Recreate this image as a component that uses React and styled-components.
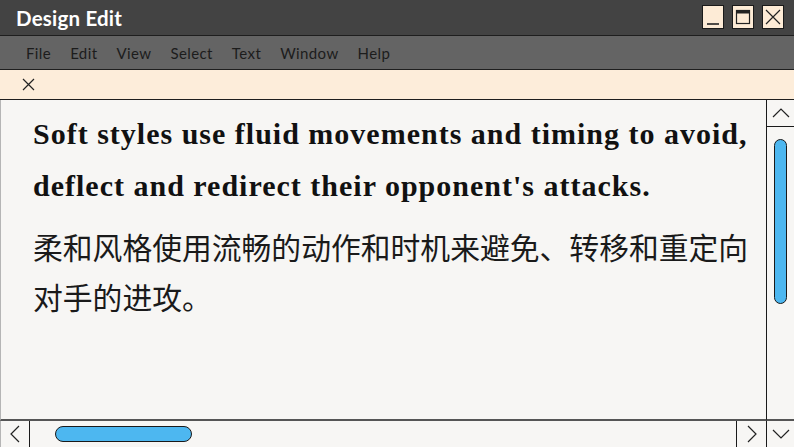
import React from "react";
import styled, { createGlobalStyle } from "styled-components";

const GlobalStyle = createGlobalStyle`
  html, body {
    margin: 0;
    padding: 0;
    background: #f7f6f4;
  }
  #root {
    width: 794px;
    height: 447px;
  }
`;

const menuItems = ["File", "Edit", "View", "Select", "Text", "Window", "Help"];

// small chevron used by all four scrollbar arrows
const Chevron = ({ dir }) => {
  const paths = {
    up: "M1 9 L9 1 L17 9",
    down: "M1 1 L9 9 L17 1",
    left: "M9 1 L1 9 L9 17",
    right: "M1 1 L9 9 L1 17",
  };
  const vertical = dir === "up" || dir === "down";
  return (
    <svg
      width={vertical ? 18 : 10}
      height={vertical ? 10 : 18}
      viewBox={vertical ? "0 0 18 10" : "0 0 10 18"}
      fill="none"
      stroke="#222"
      strokeWidth="1.2"
    >
      <path d={paths[dir]} />
    </svg>
  );
};

const App = () => {
  return (
    <>
      <GlobalStyle />
      <Window>
        <TitleBar>
          <Title>Design Edit</Title>
          <WindowButtons>
            <WinButton aria-label="minimize">
              <svg width="20" height="22" viewBox="0 0 20 22">
                <line x1="4" y1="18" x2="16" y2="18" stroke="#222" strokeWidth="1.6" />
              </svg>
            </WinButton>
            <WinButton aria-label="maximize">
              <svg width="20" height="22" viewBox="0 0 20 22">
                <rect x="3.5" y="4.5" width="13" height="13" fill="none" stroke="#222" strokeWidth="1.2" />
                <rect x="3.5" y="4.5" width="13" height="3" fill="#222" />
              </svg>
            </WinButton>
            <WinButton aria-label="close">
              <svg width="20" height="22" viewBox="0 0 20 22">
                <path d="M3 4 L17 18 M17 4 L3 18" stroke="#222" strokeWidth="1.2" />
              </svg>
            </WinButton>
          </WindowButtons>
        </TitleBar>

        <MenuBar>
          {menuItems.map((item) => (
            <MenuItem key={item}>{item}</MenuItem>
          ))}
        </MenuBar>

        <NoticeBar>
          <svg width="13" height="13" viewBox="0 0 13 13">
            <path d="M1 1 L12 12 M12 1 L1 12" stroke="#222" strokeWidth="1.2" />
          </svg>
        </NoticeBar>

        <Workspace>
          <Editor>
            <EnglishText>
              Soft styles use fluid movements and timing to avoid, deflect and
              redirect their opponent's attacks.
            </EnglishText>
            <ChineseText>
              柔和风格使用流畅的动作和时机来避免、转移和重定向对手的进攻。
            </ChineseText>
          </Editor>

          <VScroll>
            <ArrowBox $edge="bottom">
              <Chevron dir="up" />
            </ArrowBox>
            <VTrack>
              <VThumb />
            </VTrack>
          </VScroll>

          <HScroll>
            <ArrowBox $edge="right" $w="28px">
              <Chevron dir="left" />
            </ArrowBox>
            <HTrack>
              <HThumb />
            </HTrack>
            <ArrowBox $edge="left" $w="29px">
              <Chevron dir="right" />
            </ArrowBox>
          </HScroll>

          <Corner>
            <Chevron dir="down" />
          </Corner>
        </Workspace>
      </Window>
    </>
  );
};

const Window = styled.div`
  width: 794px;
  height: 447px;
  display: flex;
  flex-direction: column;
  overflow: hidden;
  background: #f7f6f4;
`;

const TitleBar = styled.div`
  height: 35px;
  flex: none;
  background: #434343;
  border-bottom: 1px solid #1e1e1e;
  display: flex;
  align-items: center;
  justify-content: space-between;
  padding: 0 10px 0 16px;
`;

const Title = styled.h1`
  margin: 0;
  font-family: "Lato", "Open Sans", sans-serif;
  font-weight: 700;
  font-size: 20.5px;
  color: #ffffff;
  letter-spacing: 0.2px;
`;

const WindowButtons = styled.div`
  display: flex;
  gap: 8px;
  align-self: flex-start;
  padding-top: 5px;
`;

const WinButton = styled.div`
  width: 20px;
  height: 22px;
  background: #fdebd6;
  border: 1px solid #1a1a1a;
  display: flex;
  align-items: center;
  justify-content: center;
  box-sizing: content-box;
  svg {
    display: block;
  }
`;

const MenuBar = styled.div`
  height: 32px;
  flex: none;
  background: #646464;
  border-bottom: 1px solid #1e1e1e;
  display: flex;
  align-items: center;
  gap: 19px;
  padding: 1px 0 0 26px;
`;

const MenuItem = styled.span`
  font-family: "Lato", "Open Sans", sans-serif;
  font-size: 15px;
  color: #1c1c1c;
  letter-spacing: 0.4px;
`;

const NoticeBar = styled.div`
  height: 29px;
  flex: none;
  background: #fdedda;
  border-bottom: 1px solid #1e1e1e;
  display: flex;
  align-items: center;
  padding-left: 22px;
`;

const Workspace = styled.div`
  flex: 1;
  display: grid;
  grid-template-columns: 1fr 27px;
  grid-template-rows: 1fr 26px;
  min-height: 0;
`;

const Editor = styled.div`
  border-left: 1px solid #b5b5b5;
  border-right: 1px solid #1a1a1a;
  border-bottom: 2px solid #555;
  padding: 8px 0 0 32px;
  overflow: hidden;
  background: #f7f6f4;
`;

const EnglishText = styled.p`
  margin: 0;
  width: 736px;
  font-family: "Liberation Serif", "Times New Roman", serif;
  font-weight: 700;
  font-size: 30px;
  line-height: 52px;
  letter-spacing: 1px;
  color: #111;
`;

const ChineseText = styled.p`
  margin: 9px 0 0;
  width: 730px;
  font-family: "Noto Sans CJK SC", sans-serif;
  font-size: 29.8px;
  line-height: 50px;
  color: #1a1a1a;
`;

const VScroll = styled.div`
  border-bottom: 2px solid #555;
  display: flex;
  flex-direction: column;
`;

const ArrowBox = styled.div`
  flex: none;
  width: ${(p) => p.$w || "auto"};
  height: ${(p) => (p.$edge === "bottom" ? "26px" : "auto")};
  display: flex;
  align-items: center;
  justify-content: center;
  border-${(p) => p.$edge}: 1px solid #1a1a1a;
`;

const VTrack = styled.div`
  flex: 1;
  padding: 12px 0 0 7px;
`;

const VThumb = styled.div`
  width: 11px;
  height: 163px;
  border: 1px solid #1a1a1a;
  border-radius: 7px;
  background: #4db7f0;
`;

const HScroll = styled.div`
  border-left: 1px solid #b5b5b5;
  border-right: 1px solid #1a1a1a;
  display: flex;
`;

const HTrack = styled.div`
  flex: 1;
  padding: 5px 0 0 25px;
`;

const HThumb = styled.div`
  width: 135px;
  height: 14px;
  border: 1px solid #1a1a1a;
  border-radius: 8px;
  background: #4db7f0;
`;

const Corner = styled.div`
  display: flex;
  align-items: center;
  justify-content: center;
`;

export default App;
